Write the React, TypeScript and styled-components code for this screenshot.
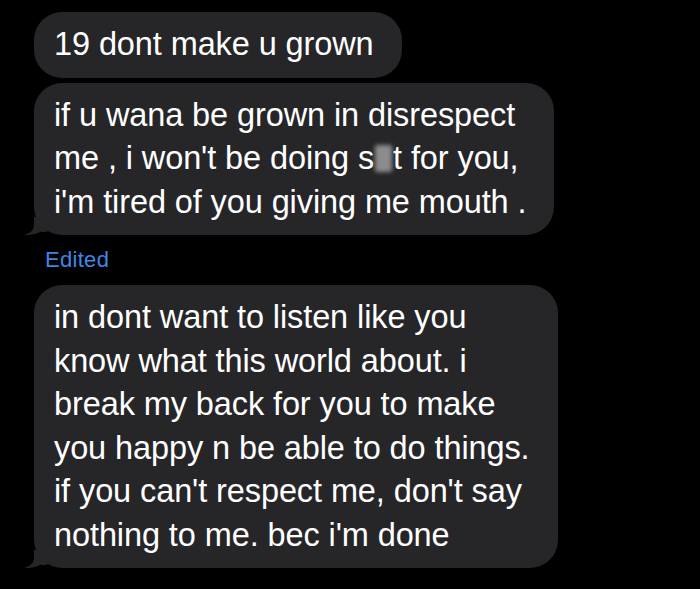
import React from 'react';
import styled, { createGlobalStyle } from 'styled-components';

const GlobalStyle = createGlobalStyle`
  html, body {
    margin: 0;
    padding: 0;
    background: #000;
  }
`;

const Thread = styled.div`
  width: 700px;
  height: 589px;
  box-sizing: border-box;
  padding: 12px 0 0 34px;
  display: flex;
  flex-direction: column;
  align-items: flex-start;
  background: #000;
  overflow: hidden;
  font-family: 'Liberation Sans', Arial, sans-serif;
`;

const Bubble = styled.div<{ $gap?: number }>`
  position: relative;
  margin-top: ${(p) => p.$gap ?? 0}px;
  padding: 11px 28px 11px 20px;
  background: #262629;
  border-radius: 28px;
  color: #fff;
  font-size: 32.5px;
  line-height: 43.5px;
  letter-spacing: -0.1px;
  white-space: nowrap;
`;

const Tail = styled.svg`
  position: absolute;
  left: -10px;
  bottom: 0;
  width: 24px;
  height: 18px;
`;

const Censor = styled.span`
  display: inline-block;
  width: 17px;
  height: 27px;
  margin: 0 1px -3px 1px;
  background: #8c8c8e;
  filter: blur(2px);
  border-radius: 2px;
`;

const EditedLabel = styled.div`
  margin: 12px 0 0 11px;
  color: #3f86e6;
  font-size: 22px;
  line-height: 26px;
  letter-spacing: 0.3px;
`;

const BubbleTail = () => (
  <Tail viewBox="0 0 24 18">
    <path
      d="M10 0 L10 8 C10 13 6 16.5 0 18 C6 18.5 13 17 17 14.5 C19 15.5 21 15.5 24 14 L24 0 Z"
      fill="#262629"
    />
  </Tail>
);

const lines = (rows: React.ReactNode[]) =>
  rows.map((row, i) => (
    <React.Fragment key={i}>
      {row}
      {i < rows.length - 1 && <br />}
    </React.Fragment>
  ));

export default function App() {
  return (
    <>
      <GlobalStyle />
      <Thread>
        <Bubble>19 dont make u grown</Bubble>
        <Bubble $gap={5}>
          {lines([
            'if u wana be grown in disrespect',
            <>
              me , i won't be doing s<Censor />t for you,
            </>,
            "i'm tired of you giving me mouth .",
          ])}
          <BubbleTail />
        </Bubble>
        <EditedLabel>Edited</EditedLabel>
        <Bubble $gap={12}>
          {lines([
            'in dont want to listen like you',
            'know what this world about. i',
            'break my back for you to make',
            'you happy n be able to do things.',
            "if you can't respect me, don't say",
            "nothing to me. bec i'm done",
          ])}
          <BubbleTail />
        </Bubble>
      </Thread>
    </>
  );
}
